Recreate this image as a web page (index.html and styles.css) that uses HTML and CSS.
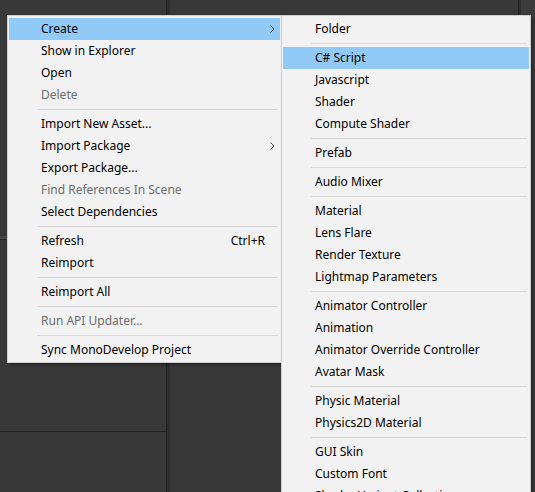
FILE: index.html
```html
<!DOCTYPE html>
<html>
<head>
<meta charset="utf-8">
<link rel="stylesheet" href="styles.css">
</head>
<body>
<div class="editor">
  <div class="panel-left">
    <div class="pl-top"></div>
    <div class="pl-band"></div>
    <div class="pl-mid"></div>
    <div class="pl-bottom"></div>
  </div>
  <div class="divider"></div>
  <div class="panel-center"></div>
  <div class="divider thin"></div>
  <div class="panel-right"></div>
</div>

<div class="menu main-menu">
  <div class="item active"><span class="label">Create</span><span class="sub"><svg width="5" height="8" viewBox="0 0 5 8"><path d="M0.5 0.5 L4 4 L0.5 7.5" fill="none" stroke="#444" stroke-width="1"/></svg></span></div>
  <div class="item"><span class="label">Show in Explorer</span><span class="sub"></span></div>
  <div class="item"><span class="label">Open</span><span class="sub"></span></div>
  <div class="item disabled"><span class="label">Delete</span><span class="sub"></span></div>
  <div class="sep"></div>
  <div class="item"><span class="label">Import New Asset...</span><span class="sub"></span></div>
  <div class="item"><span class="label">Import Package</span><span class="sub"><svg width="5" height="8" viewBox="0 0 5 8"><path d="M0.5 0.5 L4 4 L0.5 7.5" fill="none" stroke="#444" stroke-width="1"/></svg></span></div>
  <div class="item"><span class="label">Export Package...</span><span class="sub"></span></div>
  <div class="item disabled"><span class="label">Find References In Scene</span><span class="sub"></span></div>
  <div class="item"><span class="label">Select Dependencies</span><span class="sub"></span></div>
  <div class="sep"></div>
  <div class="item"><span class="label">Refresh</span><span class="shortcut">Ctrl+R</span><span class="sub"></span></div>
  <div class="item"><span class="label">Reimport</span><span class="sub"></span></div>
  <div class="sep"></div>
  <div class="item"><span class="label">Reimport All</span><span class="sub"></span></div>
  <div class="sep"></div>
  <div class="item disabled"><span class="label">Run API Updater...</span><span class="sub"></span></div>
  <div class="sep"></div>
  <div class="item"><span class="label">Sync MonoDevelop Project</span><span class="sub"></span></div>
</div>

<div class="menu sub-menu">
  <div class="item"><span class="label">Folder</span></div>
  <div class="sep"></div>
  <div class="item active"><span class="label">C# Script</span></div>
  <div class="item"><span class="label">Javascript</span></div>
  <div class="item"><span class="label">Shader</span></div>
  <div class="item"><span class="label">Compute Shader</span></div>
  <div class="sep"></div>
  <div class="item"><span class="label">Prefab</span></div>
  <div class="sep"></div>
  <div class="item"><span class="label">Audio Mixer</span></div>
  <div class="sep"></div>
  <div class="item"><span class="label">Material</span></div>
  <div class="item"><span class="label">Lens Flare</span></div>
  <div class="item"><span class="label">Render Texture</span></div>
  <div class="item"><span class="label">Lightmap Parameters</span></div>
  <div class="sep"></div>
  <div class="item"><span class="label">Animator Controller</span></div>
  <div class="item"><span class="label">Animation</span></div>
  <div class="item"><span class="label">Animator Override Controller</span></div>
  <div class="item"><span class="label">Avatar Mask</span></div>
  <div class="sep"></div>
  <div class="item"><span class="label">Physic Material</span></div>
  <div class="item"><span class="label">Physics2D Material</span></div>
  <div class="sep"></div>
  <div class="item"><span class="label">GUI Skin</span></div>
  <div class="item"><span class="label">Custom Font</span></div>
  <div class="item"><span class="label">Shader Variant Collection</span></div>
</div>
</body>
</html>
```
FILE: styles.css
```css
html, body {
  margin: 0;
  padding: 0;
  width: 535px;
  height: 492px;
  overflow: hidden;
  background: #383838;
}

.editor {
  display: flex;
  width: 535px;
  height: 492px;
}

.panel-left {
  width: 166px;
  display: flex;
  flex-direction: column;
}
.pl-top {
  height: 236px;
}
.pl-band {
  height: 3px;
  background: #444444;
}
.pl-mid {
  height: 191px;
  border-top: 1px solid #2a2a2a;
  border-bottom: 1px solid #222222;
}
.pl-bottom {
  flex: 1;
}

.divider {
  width: 4px;
  background: #2e2e2e;
  border-left: 1px solid #232323;
  box-sizing: border-box;
}
.divider.thin {
  width: 3px;
}

.panel-center {
  width: 348px;
}
.panel-right {
  flex: 1;
  background: #3c3c3c;
}

.menu {
  position: absolute;
  background: #f2f2f2;
  border: 1px solid #cfcfcf;
  box-shadow: 2px 2px 3px rgba(0, 0, 0, 0.35);
  font-family: "Noto Sans", "Open Sans", sans-serif;
  font-size: 12px;
  color: #000000;
  box-sizing: border-box;
}

.main-menu {
  left: 7px;
  top: 15px;
  width: 275px;
  padding: 2px 1px 1px 1px;
}

.sub-menu {
  left: 281px;
  top: 15px;
  width: 250px;
  padding: 2px 1px 1px 1px;
}

.item {
  display: flex;
  align-items: center;
  height: 22px;
  line-height: 22px;
  padding-left: 32px;
  white-space: nowrap;
}
.item.active {
  background: #91c9f7;
}
.item.disabled {
  color: #6d6d6d;
}
.label {
  flex: 1;
}
.sub {
  width: 15px;
  display: flex;
  justify-content: center;
  align-items: center;
}

.sep {
  height: 7px;
  display: flex;
  align-items: center;
  padding-left: 28px;
  padding-right: 2px;
}
.sep::after {
  content: "";
  flex: 1;
  height: 1px;
  background: #d7d7d7;
}
```
